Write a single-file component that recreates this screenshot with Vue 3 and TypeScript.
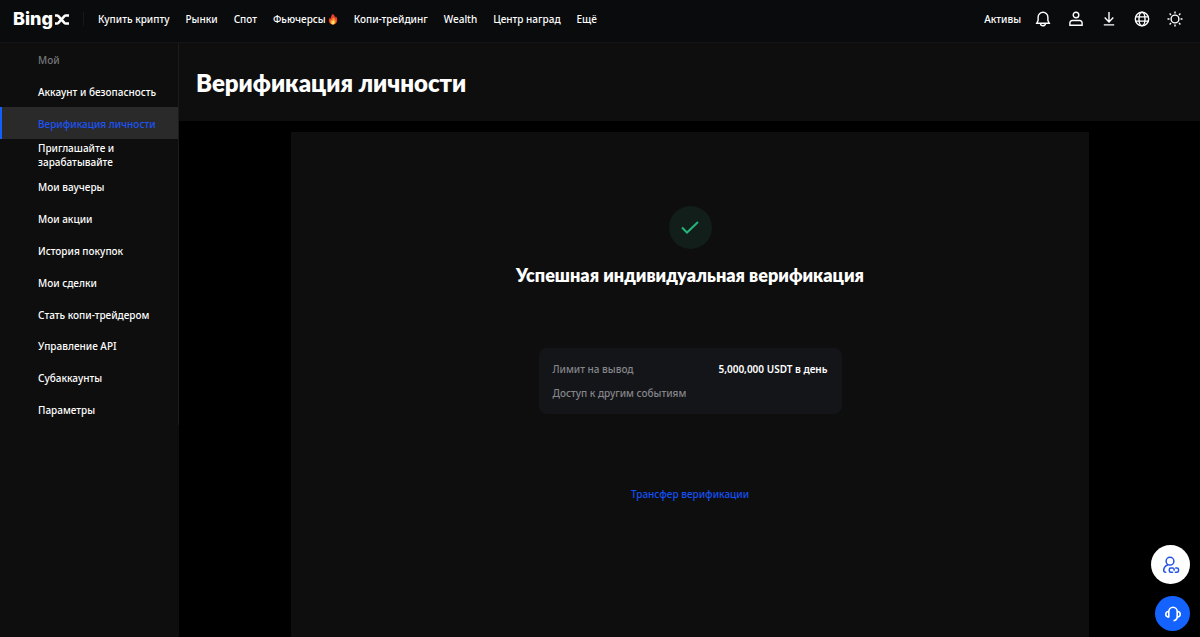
<script setup lang="ts">
import { ref } from 'vue'

interface NavLink {
  label: string
  hot?: boolean
}

const navLinks: NavLink[] = [
  { label: 'Купить крипту' },
  { label: 'Рынки' },
  { label: 'Спот' },
  { label: 'Фьючерсы', hot: true },
  { label: 'Копи-трейдинг' },
  { label: 'Wealth' },
  { label: 'Центр наград' },
  { label: 'Ещё' },
]

const menu: string[] = [
  'Аккаунт и безопасность',
  'Верификация личности',
  'Приглашайте и зарабатывайте',
  'Мои ваучеры',
  'Мои акции',
  'История покупок',
  'Мои сделки',
  'Стать копи-трейдером',
  'Управление API',
  'Субаккаунты',
  'Параметры',
]

const active = ref('Верификация личности')
</script>

<template>
  <div class="page">
    <header class="topbar">
      <a class="logo" href="#" aria-label="BingX">
        <span>Bing</span>
        <svg width="15" height="11" viewBox="0 0 15 11" fill="none" stroke="#fff" stroke-width="2.600">
          <path d="M1 1.500h2c.6 0 1 .2 1.400.600l6 6.800c.4.400.8.600 1.400.600H15" />
          <path d="M15 1.500h-3.200c-.6 0-1 .2-1.400.600l-6 6.800c-.4.400-.8.600-1.400.600H1" />
        </svg>
      </a>
      <nav class="nav">
        <a v-for="link in navLinks" :key="link.label" href="#">
          {{ link.label }}
          <svg v-if="link.hot" class="flame" width="10" height="12" viewBox="0 0 10 12">
            <path d="M4.600 1c2 1 2.200 2.400 2.500 3.600.5-.4.7-.9.7-1.400C9 4.600 9.400 6 9.200 7.600 9 10 7.300 11.600 5 11.600S.9 10 .8 7.800c0-1.500.6-2.600 1.300-3.400.1.700.4 1.100.8 1.300C2.900 3.900 3.400 2 4.600 1z" fill="#e8432a" />
            <path d="M5.200 4.400c1.500 1.400 2.600 2.500 2.500 4.200-.1 1.700-1.200 2.900-2.700 2.900s-2.700-1.100-2.700-2.700c0-1.100.5-1.800 1-2.300.2.500.4.700.8.900.1-1.100.3-2.100 1.100-3z" fill="#fb9a2c" />
            <path d="M5.200 7.200c.8.700 1.400 1.400 1.300 2.400-.1 1.100-.7 1.800-1.500 1.800s-1.500-.7-1.500-1.700c0-1.100 1.200-1.400 1.700-2.500z" fill="#ffe36a" />
          </svg>
        </a>
      </nav>
      <div class="tools">
        <a href="#">Активы</a>
        <button type="button" aria-label="Уведомления">
          <svg width="16" height="16" viewBox="0 0 16 16">
            <path d="M8 1.300a4.900 4.900 0 0 0-4.900 4.900v3.300L1.700 12.200h12.600l-1.400-2.700V6.200A4.900 4.900 0 0 0 8 1.300z" />
            <path d="M5.500 12.500a2.500 2.300 0 0 0 5 0" />
          </svg>
        </button>
        <button type="button" aria-label="Профиль">
          <svg width="16" height="16" viewBox="0 0 16 16">
            <circle cx="8" cy="4" r="2.800" />
            <path d="M1.900 14.300v-2.500a2.300 2.300 0 0 1 2.300-2.300h7.600a2.300 2.300 0 0 1 2.300 2.300v2.500z" />
          </svg>
        </button>
        <button type="button" aria-label="Скачать">
          <svg width="16" height="16" viewBox="0 0 16 16">
            <path d="M8 1v9.800M3.700 6.600 8 10.900l4.300-4.300M2.800 13.900h10.400" />
          </svg>
        </button>
        <button type="button" aria-label="Язык">
          <svg width="16" height="16" viewBox="0 0 16 16">
            <circle cx="8" cy="8" r="6.700" />
            <ellipse cx="8" cy="8" rx="3" ry="6.700" />
            <path d="M1.700 5.900h12.600M1.700 10.100h12.600" />
          </svg>
        </button>
        <button type="button" aria-label="Тема">
          <svg width="16" height="16" viewBox="0 0 16 16">
            <circle cx="8" cy="8" r="3.900" />
            <path d="M8 .5v2M8 13.500v2M.5 8h2M13.500 8h2M2.600 2.600 4 4M12 12l1.400 1.400M2.600 13.400 4 12M12 4l1.400-1.400" />
          </svg>
        </button>
      </div>
    </header>

    <div class="body">
      <aside class="sidebar">
        <ul class="menu">
          <li class="caption">Мой</li>
          <li v-for="item in menu" :key="item">
            <a href="#" :class="{ active: item === active }" @click.prevent="active = item">{{ item }}</a>
          </li>
        </ul>
      </aside>

      <main class="content">
        <div class="heading">
          <h1>Верификация личности</h1>
        </div>
        <section class="panel">
          <div class="badge">
            <svg width="20" height="16" viewBox="0 0 20 16" fill="none" stroke="#26b47c" stroke-width="2">
              <path d="M2 7.500l5 5L18 2" />
            </svg>
          </div>
          <h2>Успешная индивидуальная верификация</h2>
          <dl class="limits">
            <div>
              <dt>Лимит на вывод</dt>
              <dd>5,000,000 USDT в день</dd>
            </div>
            <div>
              <dt>Доступ к другим событиям</dt>
              <dd></dd>
            </div>
          </dl>
          <a class="transfer" href="#">Трансфер верификации</a>
        </section>
      </main>
    </div>

    <div class="floating">
      <button class="invite" type="button" aria-label="Пригласить">
        <svg width="18" height="18" viewBox="0 0 18 18" fill="none" stroke="#2354e6" stroke-width="1.500" stroke-linecap="round">
          <circle cx="8" cy="5.200" r="3.900" />
          <path d="M5.600 9C3.200 10 1.700 12.300 1.700 14.300c0 1.300.6 2 2 2" />
          <path d="M10.600 16.300H8.800a1.500 1.500 0 0 1-1.500-1.500v-1.200a1.500 1.500 0 0 1 1.500-1.500h2a1.300 1.300 0 0 1 1.300 1.300v.8M13.700 12.100h1.300a1.500 1.500 0 0 1 1.500 1.500v1.200a1.500 1.500 0 0 1-1.500 1.500h-1.600" />
        </svg>
      </button>
      <button class="support" type="button" aria-label="Поддержка">
        <svg width="18" height="18" viewBox="0 0 18 18" fill="none" stroke="#fff" stroke-width="1.600">
          <path d="M4.800 12.500V6.500a4.200 4.300 0 0 1 8.400 0v5c0 2.300-1.300 3.800-3.700 4.200" />
          <path d="M4.800 6.200C2.900 6.400 1.800 7.500 1.800 9.200s1.100 2.700 3 2.900M13.200 6.200c1.900.2 3 1.300 3 3s-1.100 2.700-3 2.900" />
        </svg>
      </button>
    </div>
  </div>
</template>

<style>
body {
  margin: 0;
  background: #000;
}
</style>

<style scoped>
.page {
  display: flex;
  flex-direction: column;
  min-height: 100vh;
  background: #000;
  color: #fff;
  font-family: "Noto Sans", sans-serif;
  font-size: 10px;
  font-weight: 500;
  line-height: 14px;
}

a {
  color: inherit;
  text-decoration: none;
}

button {
  display: flex;
  align-items: center;
  justify-content: center;
  padding: 0;
  border: 0;
  background: none;
  cursor: pointer;
}

.topbar {
  display: flex;
  align-items: center;
  box-sizing: border-box;
  height: 43px;
  padding: 0 17px 4px 13px;
  border-bottom: 1px solid #141414;
  background: #0a0b0d;
}

.logo {
  display: flex;
  align-items: center;
  gap: 1px;
  padding-right: 14px;
  border-right: 1px solid #17181b;
  font-family: Inter, sans-serif;
  font-size: 18px;
  font-weight: 800;
  line-height: 14px;
}

.nav {
  display: flex;
  flex: 1;
  gap: 16px;
  padding-left: 14px;
}

.nav a {
  display: flex;
  align-items: center;
  gap: 2px;
  white-space: nowrap;
}

.tools {
  display: flex;
  align-items: center;
  gap: 17px;
}

.tools a {
  margin-right: -3px;
}

.tools svg {
  display: block;
  fill: none;
  stroke: #fff;
  stroke-width: 1.4;
}

.body {
  display: flex;
  flex: 1;
}

.sidebar {
  flex: none;
  width: 179px;
  background: #0e0e0e;
}

.menu {
  display: grid;
  grid-auto-rows: 1fr;
  box-sizing: border-box;
  height: 382px;
  margin: 0;
  padding: 0;
  border-right: 1px solid #1c1c1c;
  list-style: none;
}

.menu li,
.menu a {
  display: flex;
  align-items: center;
  min-height: 0;
}

.menu a {
  flex: 1;
  align-self: stretch;
  padding: 2px 16px 0 36px;
  border-left: 2px solid transparent;
}

.menu .caption {
  padding: 2px 0 0 38px;
  color: #77787b;
}

.menu .active {
  border-left-color: #1460ff;
  background: #2a2a2a;
  color: #1c54f5;
}

.content {
  display: flex;
  flex: 1;
  flex-direction: column;
}

.heading {
  display: flex;
  align-items: center;
  box-sizing: border-box;
  height: 78px;
  padding: 1px 0 0 17px;
  background: #0e0e0e;
}

h1,
h2 {
  margin: 0;
  font-family: Lato, "Noto Sans", sans-serif;
  font-weight: 800;
}

h1 {
  font-size: 24px;
  line-height: 32px;
}

.panel {
  display: flex;
  flex: 1;
  flex-direction: column;
  align-items: center;
  box-sizing: border-box;
  margin: 11px 111px 0 112px;
  padding: 74px 0 24px;
  background: #0e0e0e;
}

.badge {
  display: flex;
  align-items: center;
  justify-content: center;
  width: 43px;
  height: 43px;
  border-radius: 50%;
  background: #111e1a;
}

h2 {
  margin-top: 14px;
  font-size: 18px;
  line-height: 24px;
}

.limits {
  display: grid;
  gap: 10px;
  box-sizing: border-box;
  width: 303px;
  margin: 61px 0 0;
  padding: 14px;
  border-radius: 8px;
  background: #141519;
}

.limits div {
  display: flex;
  justify-content: space-between;
}

.limits dt {
  color: #85868a;
}

.limits dd {
  margin: 0;
  font-weight: 600;
}

.transfer {
  margin-top: 73px;
  color: #1450f5;
}

.floating {
  position: fixed;
  right: 10px;
  bottom: 6px;
  display: flex;
  flex-direction: column;
  align-items: flex-end;
  gap: 12px;
}

.floating button {
  border-radius: 50%;
}

.invite {
  width: 39px;
  height: 39px;
  background: #fff;
}

.support {
  width: 35px;
  height: 35px;
  background: #1463ff;
}
</style>
